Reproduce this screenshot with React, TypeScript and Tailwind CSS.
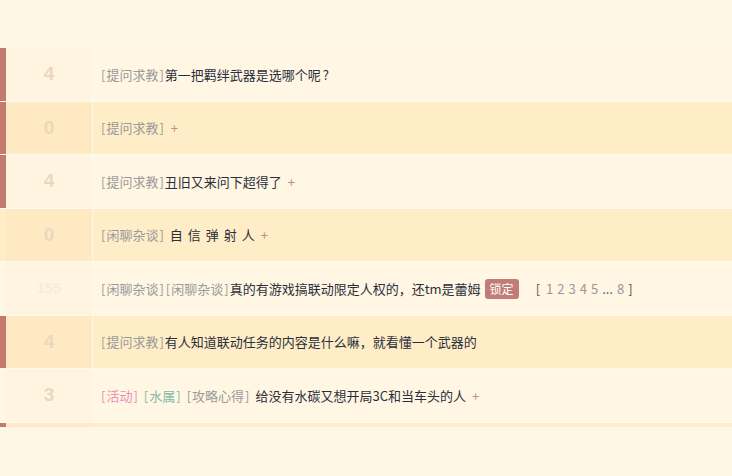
import type { ReactNode } from 'react';

interface Row {
  count: string;
  marked: boolean;
  alt: boolean;
  small?: boolean;
  body: ReactNode;
}

const Br = ({ c }: { c: string }) => <span className="mx-[1px]">{c}</span>;

const Tag = ({ children, color = 'text-[#9a9a9a]' }: { children: ReactNode; color?: string }) => (
  <span className={color}>
    <Br c="[" />
    {children}
    <Br c="]" />
  </span>
);

const Plus = () => <span className="ml-[6px] text-[#c0907e]">+</span>;

const rows: Row[] = [
  {
    count: '4',
    marked: true,
    alt: false,
    body: (
      <>
        <Tag>提问求教</Tag>
        <span>第一把羁绊武器是选哪个呢</span>
        <span className="ml-[2px]">?</span>
      </>
    ),
  },
  {
    count: '0',
    marked: true,
    alt: true,
    body: (
      <>
        <Tag>提问求教</Tag>
        <Plus />
      </>
    ),
  },
  {
    count: '4',
    marked: true,
    alt: false,
    body: (
      <>
        <Tag>提问求教</Tag>
        <span>丑旧又来问下超得了</span>
        <Plus />
      </>
    ),
  },
  {
    count: '0',
    marked: false,
    alt: true,
    body: (
      <>
        <Tag>闲聊杂谈</Tag>
        <span className="ml-[5px] tracking-[5px]">自信弹射</span>
        <span>人</span>
        <Plus />
      </>
    ),
  },
  {
    count: '155',
    marked: false,
    alt: false,
    small: true,
    body: (
      <>
        <Tag>闲聊杂谈</Tag>
        <Tag>闲聊杂谈</Tag>
        <span>真的有游戏搞联动限定人权的，还tm是蕾姆</span>
        <span className="ml-[4px] rounded-[3px] bg-[#c27c78] px-[5px] py-[1px] text-[12px] text-white">锁定</span>
        <span className="ml-[17px] flex items-center gap-[4px]">
          <span className="text-[#555]">[</span>
          <span className="ml-[2px] text-[#999]">1</span>
          <span className="text-[#999]">2</span>
          <span className="text-[#999]">3</span>
          <span className="text-[#999]">4</span>
          <span className="text-[#999]">5</span>
          <span className="text-[#555]">...</span>
          <span className="text-[#999]">8</span>
          <span className="text-[#555]">]</span>
        </span>
      </>
    ),
  },
  {
    count: '4',
    marked: true,
    alt: true,
    body: (
      <>
        <Tag>提问求教</Tag>
        <span>有人知道联动任务的内容是什么嘛，就看懂一个武器的</span>
      </>
    ),
  },
  {
    count: '3',
    marked: false,
    alt: false,
    body: (
      <>
        <Tag color="text-[#ea8fb8]">活动</Tag>
        <span className="ml-[4px]" />
        <Tag color="text-[#7fb8a6]">水属</Tag>
        <span className="ml-[4px]" />
        <Tag>攻略心得</Tag>
        <span className="ml-[5px]">给没有水碳又想开局3C和当车头的人</span>
        <Plus />
      </>
    ),
  },
];

export default function App() {
  return (
    <div
      className="min-h-[476px] w-[732px] bg-[#fff7e6] pt-[48px] text-[13px] text-[#2b2f3a]"
      style={{ fontFamily: '"Microsoft YaHei", "Noto Sans CJK SC", "Noto Sans", sans-serif' }}
    >
      {rows.map((r, i) => (
        <div
          key={i}
          className={`flex h-[53.57px] border-b border-[#fffaf0] ${r.alt ? 'bg-[#ffedc8]' : 'bg-[#fff6e4]'}`}
        >
          <div className={`w-[6px] shrink-0 ${r.marked ? 'bg-[#c47b6f]' : ''}`} />
          <div
            className={`flex w-[87px] shrink-0 items-center justify-center border-r border-[#fff8ea] font-bold ${
              r.alt ? 'bg-[#fee9c2]' : 'bg-[#fff4df]'
            } ${r.small ? 'text-[14px] text-[#f5ecdd]' : 'text-[19px] text-[#ead7bf]'}`}
            style={{ fontFamily: 'Arial, "Liberation Sans", sans-serif' }}
          >
            {r.count}
          </div>
          <div className="flex items-center whitespace-nowrap pl-[7px]">{r.body}</div>
        </div>
      ))}
      <div className="flex h-[4px] bg-[#ffedc8]">
        <div className="w-[6px] bg-[#c47b6f]" />
        <div className="w-[87px] bg-[#fee9c2]" />
      </div>
    </div>
  );
}
